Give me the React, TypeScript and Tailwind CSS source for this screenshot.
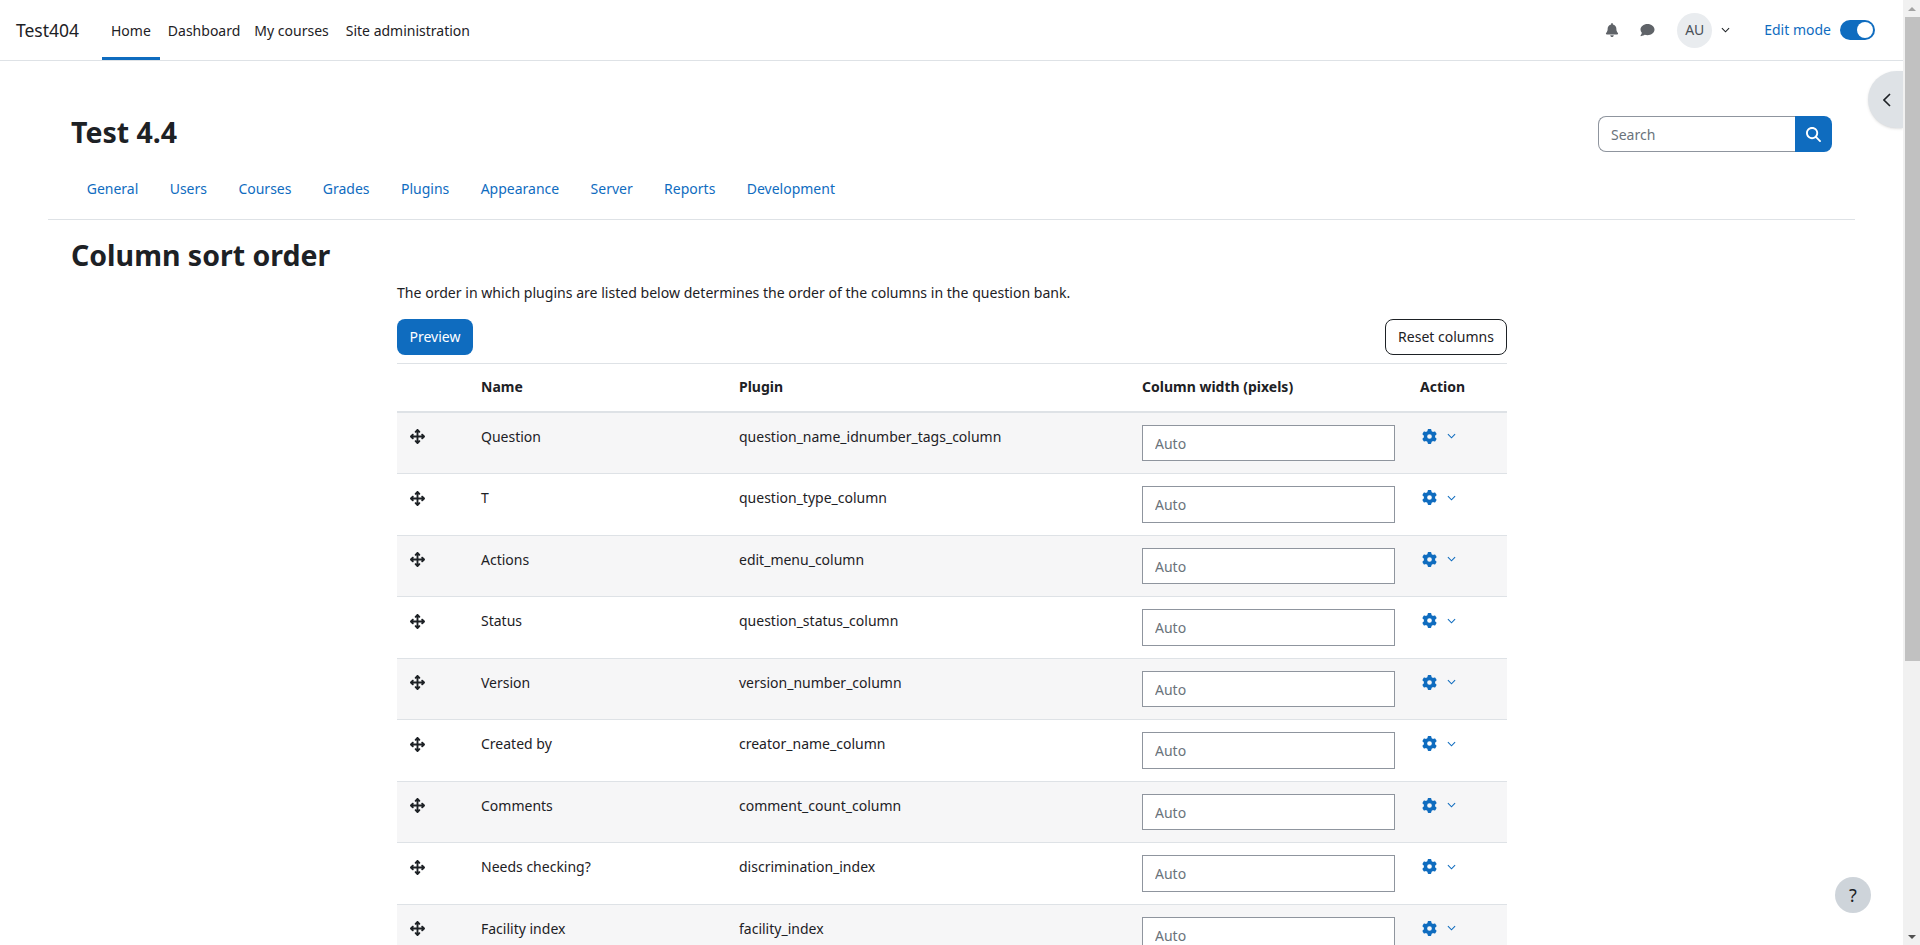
import React from "react";
import { FaBell, FaComment, FaGear, FaMagnifyingGlass, FaArrowsUpDownLeftRight } from "react-icons/fa6";

const rows = [
  ["Question", "question_name_idnumber_tags_column"],
  ["T", "question_type_column"],
  ["Actions", "edit_menu_column"],
  ["Status", "question_status_column"],
  ["Version", "version_number_column"],
  ["Created by", "creator_name_column"],
  ["Comments", "comment_count_column"],
  ["Needs checking?", "discrimination_index"],
  ["Facility index", "facility_index"],
];

const tabs = ["General", "Users", "Courses", "Grades", "Plugins", "Appearance", "Server", "Reports", "Development"];

function Caret({ className }: { className: string }) {
  return (
    <svg viewBox="0 0 10 6" className={className} fill="none" stroke="currentColor" strokeWidth="1.2">
      <path d="M1 1l4 4 4-4" />
    </svg>
  );
}

export default function App() {
  return (
    <div className="relative flex h-[945px] w-[1920px] overflow-hidden bg-white font-['Noto_Sans',sans-serif] text-[14px] leading-[22.5px] text-[#1d2125]">
      <div className="relative h-full w-[1903px] overflow-hidden">
        <nav className="flex h-[61px] items-center border-b border-[#dee2e6] pl-4 pr-[28px]">
          <span className="w-[86px] pt-[1px] text-[17.5px]">Test404</span>
          <a className="relative flex h-[60px] items-center px-[9px] pt-[2px]">
            Home
            <span className="absolute inset-x-0 bottom-0 h-[3px] bg-[#0f6cbf]" />
          </a>
          <a className="pl-[8px] pr-[6px] pt-[2px]">Dashboard</a>
          <a className="pl-[8px] pr-[9px] pt-[2px]">My courses</a>
          <a className="px-[8px] pt-[2px]">Site administration</a>
          <div className="ml-auto flex items-center">
            <FaBell className="h-[14px] w-[14px] text-[#5f6368]" />
            <FaComment className="ml-[21px] h-[14px] w-[15px] text-[#5f6368]" />
            <div className="ml-[22px] flex h-[35px] w-[35px] items-center justify-center rounded-full bg-[#e9ecef] pt-[1px] text-[#495057]">AU</div>
            <Caret className="ml-[9px] h-[6px] w-[9px] text-[#1d2125]" />
            <span className="ml-[34px] pt-[1px] text-[#0f6cbf]">Edit mode</span>
            <div className="ml-[9px] flex h-[20px] w-[35px] items-center justify-end rounded-full bg-[#0f6cbf] px-[2px]">
              <div className="h-[16px] w-[16px] rounded-full bg-white" />
            </div>
          </div>
        </nav>

        <div className="mx-[48px] w-[1807px]">
          <div className="flex items-center justify-between pl-[23px] pr-[23px] pt-[55px]">
            <h1 className="-mt-[5px] text-[28.5px] font-bold leading-[36px]">Test 4.4</h1>
            <div className="flex h-[36px] w-[234px]">
              <input placeholder="Search" className="h-full w-[197px] rounded-l-[8px] border border-r-0 border-[#8f959e] bg-white px-[12px] placeholder:text-[#6a737b]" />
              <div className="flex h-full w-[37px] items-center justify-center rounded-r-[8px] bg-[#0f6cbf]">
                <FaMagnifyingGlass className="h-[15px] w-[15px] text-white" />
              </div>
            </div>
          </div>
          <div className="flex h-[68px] items-center border-b border-[#dee2e6] pl-[23px] pt-[7px]">
            {tabs.map((t) => (
              <a key={t} className="px-[15.7px] text-[#0f6cbf]">{t}</a>
            ))}
          </div>
          <h2 className="ml-[23px] mt-[17px] text-[28.5px] font-bold leading-[36px]">Column sort order</h2>
          <div className="ml-[349px] w-[1110px]">
            <p className="mt-[8px] pt-[1px] text-[14.08px] leading-[21.5px]">The order in which plugins are listed below determines the order of the columns in the question bank.</p>
            <div className="mt-[15.5px] flex items-center justify-between">
              <button className="h-[36px] w-[76px] rounded-[8px] bg-[#0f6cbf] text-white">Preview</button>
              <button className="h-[36px] w-[122px] rounded-[8px] border border-[#1d2125] bg-white">Reset columns</button>
            </div>
            <table className="mt-[8px] w-[1110px] table-fixed border-collapse">
              <colgroup>
                <col className="w-[72px]" />
                <col className="w-[258px]" />
                <col className="w-[403px]" />
                <col className="w-[278px]" />
                <col className="w-[99px]" />
              </colgroup>
              <thead>
                <tr className="border-t border-[#dee2e6]">
                  <th className="border-b-2 border-[#dee2e6] p-3" />
                  <th className="border-b-2 border-[#dee2e6] p-3 text-left font-bold">Name</th>
                  <th className="border-b-2 border-[#dee2e6] p-3 text-left font-bold">Plugin</th>
                  <th className="border-b-2 border-[#dee2e6] p-3 text-left font-bold">Column width (pixels)</th>
                  <th className="border-b-2 border-[#dee2e6] p-3 text-left font-bold">Action</th>
                </tr>
              </thead>
              <tbody>
                {rows.map(([name, plugin], i) => (
                  <tr key={name} className={`border-b border-[#dee2e6] ${i % 2 === 0 ? "bg-[#f6f6f7]" : "bg-white"}`}>
                    <td className="px-3 pb-[11px] pt-[13px] align-top">
                      <div className="flex h-[22.5px] items-center pl-[1px]">
                        <FaArrowsUpDownLeftRight className="h-[15px] w-[15px] text-[#1d2125]" />
                      </div>
                    </td>
                    <td className="px-3 pb-[11px] pt-[13px] align-top">{name}</td>
                    <td className="px-3 pb-[11px] pt-[13px] align-top">{plugin}</td>
                    <td className="p-3 align-top">
                      <input placeholder="Auto" className="h-[36.5px] w-[253px] border border-[#8f959e] bg-white px-[12px] pt-[1px] placeholder:text-[#6a737b]" />
                    </td>
                    <td className="px-3 pb-[11px] pt-[12.5px] align-top">
                      <div className="flex h-[22.5px] items-center pl-[2px]">
                        <FaGear className="h-[15px] w-[15px] text-[#0f6cbf]" />
                        <Caret className="ml-[10px] h-[6px] w-[9px] text-[#0f6cbf]" />
                      </div>
                    </td>
                  </tr>
                ))}
              </tbody>
            </table>
          </div>
        </div>

        <div className="absolute right-0 top-[71px] flex h-[57px] w-[35px] items-center justify-center rounded-l-full bg-[#dee2e6] pl-[2px] shadow-sm">
          <svg viewBox="0 0 8 14" className="h-[14px] w-[8px] text-[#1d2125]" fill="none" stroke="currentColor" strokeWidth="1.6">
            <path d="M7 1L1 7l6 6" />
          </svg>
        </div>
        <div className="absolute left-[1835px] top-[877px] flex h-[36px] w-[36px] items-center justify-center rounded-full bg-[#ced4da] text-[18px]">?</div>
      </div>

      <div className="flex h-full w-[17px] flex-col bg-[#f1f1f1]">
        <div className="flex h-[17px] items-center justify-center">
          <div className="h-0 w-0 border-x-[4px] border-b-[4px] border-x-transparent border-b-[#a3a3a3]" />
        </div>
        <div className="ml-[2px] h-[644px] bg-[#c1c1c1]" />
        <div className="mt-auto flex h-[17px] items-center justify-center">
          <div className="h-0 w-0 border-x-[4px] border-t-[4px] border-x-transparent border-t-[#505050]" />
        </div>
      </div>
    </div>
  );
}
